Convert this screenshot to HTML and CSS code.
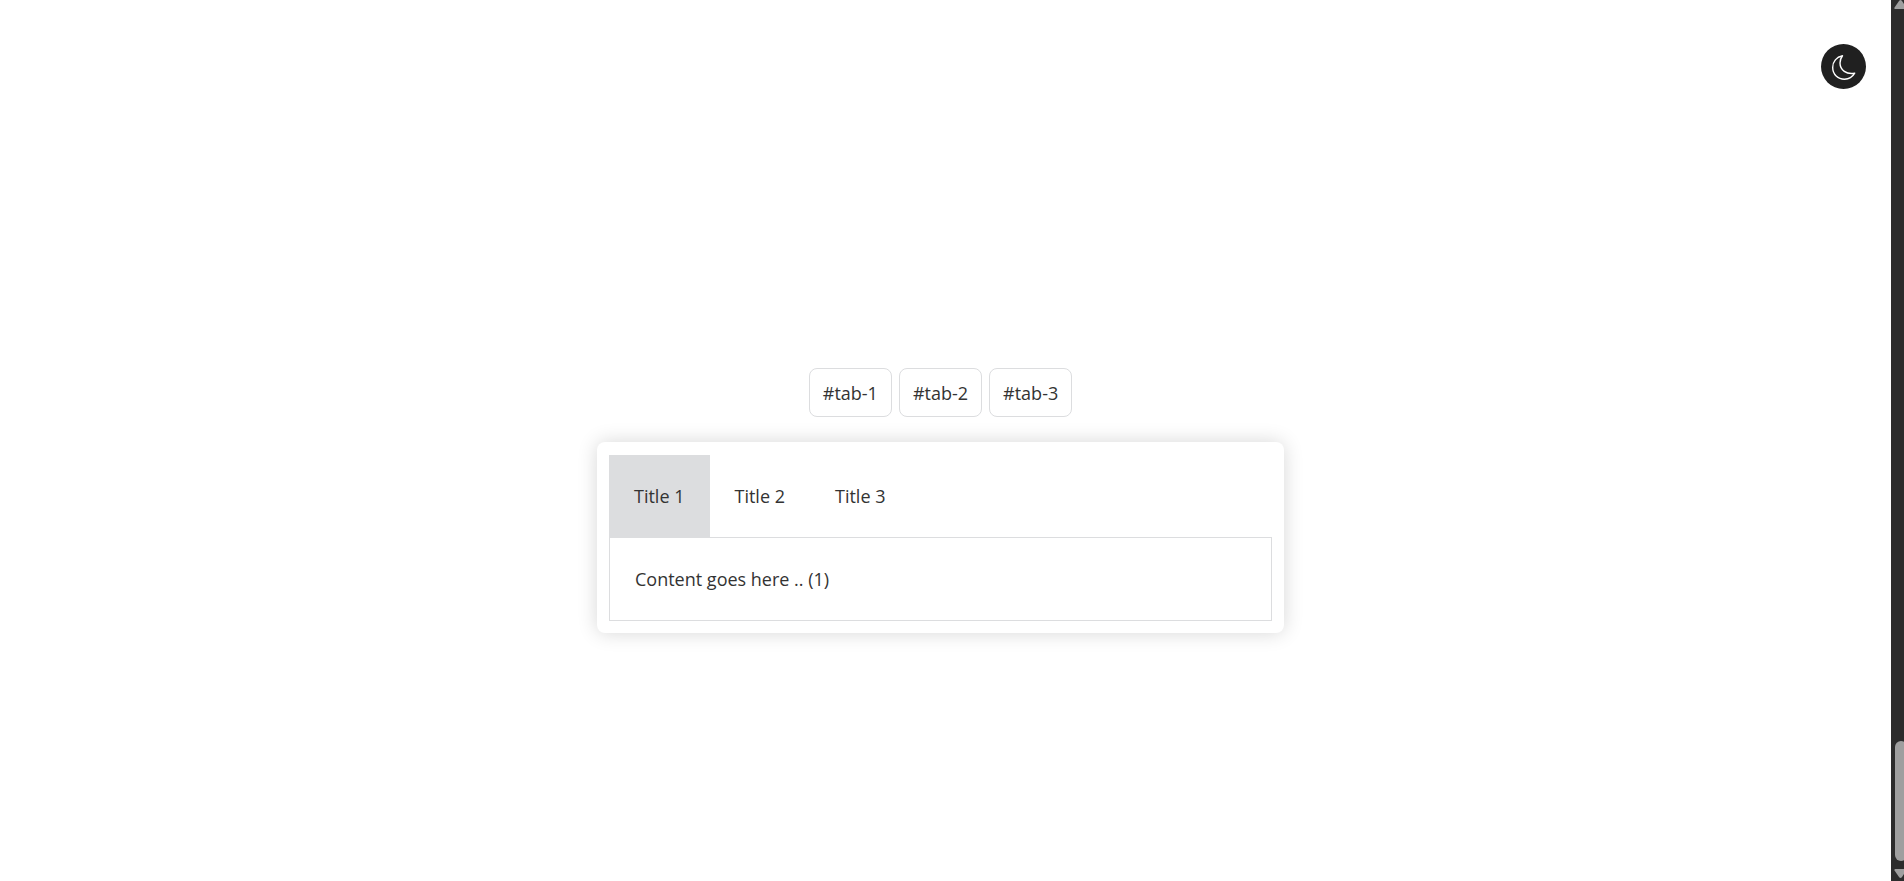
FILE: index.html
```
<!DOCTYPE html>
<html lang="en">
<head>
    <meta charset="UTF-8">
    <meta name="viewport" content="width=device-width, initial-scale=1.0">
    <title>Tabs</title>
    <link rel="stylesheet" href="styles.css">
</head>
<body>
    <main class="page">
        <nav class="hash-links">
            <a href="#tab-1">#tab-1</a>
            <a href="#tab-2">#tab-2</a>
            <a href="#tab-3">#tab-3</a>
        </nav>

        <div class="tabs">
            <div class="tab-list" role="tablist">
                <button type="button" class="tab active" role="tab" id="title-1" aria-selected="true" aria-controls="panel">Title 1</button>
                <button type="button" class="tab" role="tab" id="title-2" aria-selected="false" aria-controls="panel">Title 2</button>
                <button type="button" class="tab" role="tab" id="title-3" aria-selected="false" aria-controls="panel">Title 3</button>
            </div>
            <div class="panel" role="tabpanel" id="panel" aria-labelledby="title-1">Content goes here .. (1)</div>
        </div>
    </main>

    <button type="button" class="theme-toggle" aria-label="Toggle dark mode">
        <svg viewBox="0 0 24 24" width="24" height="24" aria-hidden="true">
            <path d="M10.500 0.700C4.500 2 0.700 6.500 0.700 12.500C0.700 19.500 6 24.200 12.500 24.200C17 24.200 20.500 22 22.700 18.200C14.500 19.800 8 15 8 8C8 5.500 8.800 2.800 10.500 0.700Z"/>
        </svg>
    </button>

    <div class="scrollbar" aria-hidden="true">
        <svg class="arrow" viewBox="0 0 13 10" width="13" height="10"><path d="M5 1Q6.500 -1 8 1L12.500 7.500Q13 9 11.500 9H1.500Q0 9 .5 7.500Z"/></svg>
        <div class="thumb"></div>
        <svg class="arrow" viewBox="0 0 13 10" width="13" height="10"><path d="M5 8Q6.500 10 8 8L12.500 1.500Q13 0 11.500 0H1.500Q0 0 .5 1.500Z"/></svg>
    </div>
</body>
</html>
```

FILE: styles.css
```
* {
    box-sizing: border-box;
}

body {
    display: flex;
    min-height: 100vh;
    margin: 0;
    font-family: "Open Sans", sans-serif;
    font-size: 18px;
    line-height: 24px;
    color: #333;
    background: #fff;
}

.page {
    flex: 1;
    display: flex;
    flex-direction: column;
    align-items: center;
    justify-content: center;
    gap: 25px;
    padding: 1px 10px 0 0;
}

.hash-links {
    display: flex;
    gap: 7px;
    margin-top: 119px;
}

.hash-links a {
    padding: 12px 13px 11px;
    border: 1px solid #dcdddf;
    border-radius: 8px;
    color: inherit;
    text-decoration: none;
}

.tabs {
    width: 687px;
    max-width: 100%;
    padding: 13px 12px 12px;
    border-radius: 8px;
    background: #fff;
    box-shadow: 0 0 20px rgba(0, 0, 0, 0.16);
}

.tab-list {
    display: flex;
}

.tab {
    padding: 29px 25px;
    border: none;
    font: inherit;
    color: inherit;
    background: none;
    cursor: pointer;
}

.tab.active {
    background: #dcdddf;
}

.panel {
    padding: 29px 25px;
    border: 1px solid #dcdddf;
}

.theme-toggle {
    position: fixed;
    top: 44px;
    right: 38px;
    display: flex;
    align-items: center;
    justify-content: center;
    width: 45px;
    height: 45px;
    padding: 0;
    border: none;
    border-radius: 50%;
    background: #202020;
    cursor: pointer;
}

.theme-toggle svg {
    overflow: visible;
}

.theme-toggle path {
    fill: none;
    stroke: #fff;
    stroke-width: 1.4;
    stroke-linejoin: round;
}

.scrollbar {
    display: flex;
    flex-direction: column;
    width: 13px;
    padding: 0 0 2px 3px;
    overflow: hidden;
    background: #2c2c2c;
}

.arrow {
    flex: none;
    fill: #9f9f9f;
}

.thumb {
    width: 12px;
    height: 120px;
    margin: auto 0 8px 1px;
    border-radius: 6px;
    background: #9f9f9f;
}
```
